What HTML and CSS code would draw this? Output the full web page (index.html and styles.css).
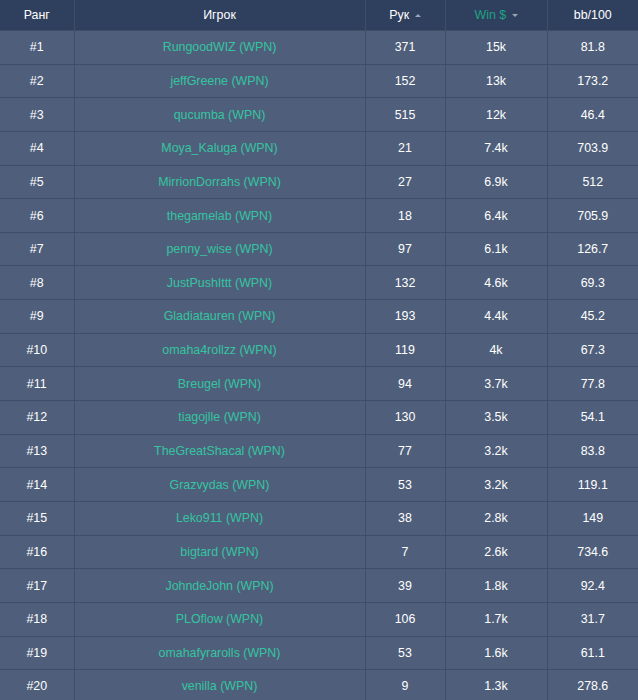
FILE: index.html
```html
<!DOCTYPE html>
<html lang="ru">
<head>
<meta charset="utf-8">
<link rel="stylesheet" href="styles.css">
</head>
<body>
<table class="board">
<colgroup>
<col class="c-rank"><col class="c-player"><col class="c-hands"><col class="c-win"><col class="c-bb">
</colgroup>
<thead>
<tr>
<th>Ранг</th>
<th>Игрок</th>
<th>Рук <span class="arrow up"></span></th>
<th class="active">Win $ <span class="arrow down"></span></th>
<th>bb/100</th>
</tr>
</thead>
<tbody>
<tr><td>#1</td><td class="player">RungoodWIZ (WPN)</td><td>371</td><td>15k</td><td>81.8</td></tr>
<tr><td>#2</td><td class="player">jeffGreene (WPN)</td><td>152</td><td>13k</td><td>173.2</td></tr>
<tr><td>#3</td><td class="player">qucumba (WPN)</td><td>515</td><td>12k</td><td>46.4</td></tr>
<tr><td>#4</td><td class="player">Moya_Kaluga (WPN)</td><td>21</td><td>7.4k</td><td>703.9</td></tr>
<tr><td>#5</td><td class="player">MirrionDorrahs (WPN)</td><td>27</td><td>6.9k</td><td>512</td></tr>
<tr><td>#6</td><td class="player">thegamelab (WPN)</td><td>18</td><td>6.4k</td><td>705.9</td></tr>
<tr><td>#7</td><td class="player">penny_wise (WPN)</td><td>97</td><td>6.1k</td><td>126.7</td></tr>
<tr><td>#8</td><td class="player">JustPushIttt (WPN)</td><td>132</td><td>4.6k</td><td>69.3</td></tr>
<tr><td>#9</td><td class="player">Gladiatauren (WPN)</td><td>193</td><td>4.4k</td><td>45.2</td></tr>
<tr><td>#10</td><td class="player">omaha4rollzz (WPN)</td><td>119</td><td>4k</td><td>67.3</td></tr>
<tr><td>#11</td><td class="player">Breugel (WPN)</td><td>94</td><td>3.7k</td><td>77.8</td></tr>
<tr><td>#12</td><td class="player">tiagojlle (WPN)</td><td>130</td><td>3.5k</td><td>54.1</td></tr>
<tr><td>#13</td><td class="player">TheGreatShacal (WPN)</td><td>77</td><td>3.2k</td><td>83.8</td></tr>
<tr><td>#14</td><td class="player">Grazvydas (WPN)</td><td>53</td><td>3.2k</td><td>119.1</td></tr>
<tr><td>#15</td><td class="player">Leko911 (WPN)</td><td>38</td><td>2.8k</td><td>149</td></tr>
<tr><td>#16</td><td class="player">bigtard (WPN)</td><td>7</td><td>2.6k</td><td>734.6</td></tr>
<tr><td>#17</td><td class="player">JohndeJohn (WPN)</td><td>39</td><td>1.8k</td><td>92.4</td></tr>
<tr><td>#18</td><td class="player">PLOflow (WPN)</td><td>106</td><td>1.7k</td><td>31.7</td></tr>
<tr><td>#19</td><td class="player">omahafyrarolls (WPN)</td><td>53</td><td>1.6k</td><td>61.1</td></tr>
<tr><td>#20</td><td class="player">venilla (WPN)</td><td>9</td><td>1.3k</td><td>278.6</td></tr>
</tbody>
</table>
</body>
</html>
```
FILE: styles.css
```css
html, body {
  margin: 0;
  padding: 0;
  background: #4f5f7b;
}
.board {
  width: 638px;
  border-collapse: collapse;
  table-layout: fixed;
  font-family: "Liberation Sans", Arial, sans-serif;
  font-size: 12.4px;
  color: #ffffff;
}
.c-rank { width: 74px; }
.c-player { width: 291px; }
.c-hands { width: 80px; }
.c-win { width: 102px; }
.c-bb { width: 91px; }
.board th {
  background: #2f405e;
  font-weight: normal;
  height: 30px;
  padding: 0;
  text-align: center;
  border-left: 1px solid #3e4e69;
  border-bottom: 1px solid #3e4e69;
}
.board th:first-child, .board td:first-child { border-left: none; }
.board th.active { color: #1fa283; }
.board td {
  background: #4f5f7b;
  height: 32.65px;
  padding: 0;
  text-align: center;
  border-left: 1px solid #3e4e69;
  border-bottom: 1px solid #3e4e69;
}
.board td.player { color: #35c4a0; }
.arrow {
  display: inline-block;
  width: 0;
  height: 0;
  border-left: 3px solid transparent;
  border-right: 3px solid transparent;
  vertical-align: middle;
  margin-left: 2px;
}
.arrow.up { border-bottom: 3px solid #9aa6b8; }
.arrow.down { border-top: 3px solid #9aa6b8; }
```
